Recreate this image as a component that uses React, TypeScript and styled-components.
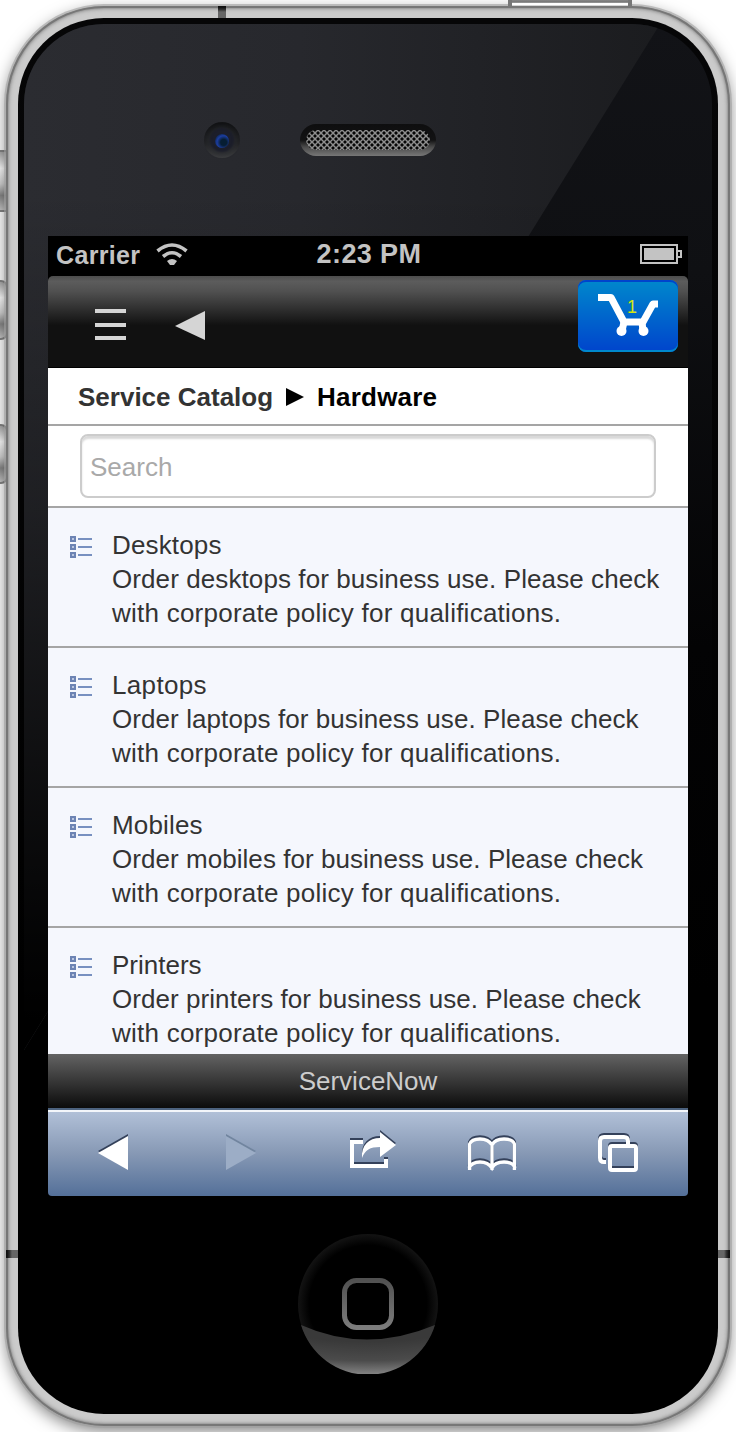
import React from 'react';
import styled, { createGlobalStyle } from 'styled-components';

const GlobalStyle = createGlobalStyle`
  * { box-sizing: border-box; }
  body { margin: 0; background: #fff; font-family: "Liberation Sans", Arial, sans-serif; }
`;

const Page = styled.main`
  position: relative;
  width: 736px;
  height: 1432px;
  padding: 6px;
  overflow: hidden;
  background: #fff;
`;

const Shell = styled.div`
  position: relative;
  width: 724px;
  height: 1420px;
  padding: 12px;
  border-radius: 98px;
  background: #cbcbcb;
  box-shadow:
    inset 0 0 0 2px #777,
    inset 0 0 2px 3px #989898,
    inset 0 0 3px 5px #bdbdbd,
    0 0 0 2px rgba(160, 160, 160, 0.6),
    0 5px 16px rgba(0, 0, 0, 0.5);
`;

const Bezel = styled.div`
  height: 1396px;
  padding: 6px;
  border-radius: 86px;
  background: linear-gradient(#060607, #000 70%);
`;

const Face = styled.div`
  position: relative;
  display: flex;
  flex-direction: column;
  align-items: center;
  height: 1384px;
  border-radius: 80px;
  overflow: hidden;
  background: linear-gradient(180deg, #121317 0%, #0f1013 18%, #030304 45%, #000 70%);
  &::before {
    content: '';
    position: absolute;
    inset: 0;
    clip-path: polygon(0 0, 636px 0, 0 1026px);
    background:
      linear-gradient(180deg, rgba(0, 0, 0, 0) 12%, rgba(0, 0, 0, 0.3) 35%, rgba(0, 0, 0, 0.9) 66%, #000 72%),
      linear-gradient(90deg, #2b2c31 0, #27282d 40%, #1b1c1f 92%);
  }
`;

const Top = styled.div`
  position: relative;
  display: flex;
  align-items: flex-start;
  width: 100%;
  height: 212px;
  padding: 98px 0 0 180px;
  gap: 60px;
`;

const Camera = styled.div`
  display: grid;
  place-items: center;
  width: 36px;
  height: 36px;
  border-radius: 50%;
  background: linear-gradient(#111214, #222326 60%, #3c3d3f);
  &::before {
    content: '';
    width: 14px;
    height: 14px;
    margin-top: 2px;
    border-radius: 50%;
    background: radial-gradient(circle at 62% 60%, #061e33 0 25%, #1c3da0 55%, #0d2348 80%);
    box-shadow: 0 -1px 2px 5px #1c1e2a, 0 0 3px 8px rgba(42, 43, 48, 0.5);
  }
`;

const Speaker = styled.svg`
  display: block;
  margin-top: 2px;
`;

const Screen = styled.div`
  position: relative;
  display: flex;
  flex-direction: column;
  width: 640px;
  height: 960px;
  overflow: hidden;
  background: #000;
  border-radius: 0 0 4px 4px;
`;

const StatusBar = styled.div`
  display: grid;
  grid-template-columns: 1fr auto 1fr;
  align-items: center;
  height: 40px;
  padding: 0 6px 4px 8px;
  color: #c3c3c3;
  font-weight: 700;
  font-size: 27px;
  line-height: 36px;
`;

const CarrierGroup = styled.div`
  display: flex;
  align-items: center;
  gap: 16px;
  font-size: 25px;
  letter-spacing: 0.35px;
  span { position: relative; top: 1px; }
`;

const Clock = styled.span`
  letter-spacing: 0.4px;
`;

const Battery = styled.svg`
  justify-self: end;
`;

const Toolbar = styled.div`
  display: flex;
  height: 92px;
  padding: 4px 10px 0 46px;
  border-bottom: 1px solid #000;
  border-radius: 5px 5px 0 0;
  background: linear-gradient(#4c4c4c 0, #5c5c5c 6%, #505050 17%, #2c2c2c 38%, #111 54%, #111 100%);
`;

const ToolIcon = styled.svg`
  display: block;
  margin: 28px 46px 0 0;
`;

const CartButton = styled.button`
  position: relative;
  width: 100px;
  height: 72px;
  margin-left: auto;
  padding: 0;
  border: 0;
  border-radius: 8px;
  background: linear-gradient(#08c, #04c);
  box-shadow: inset 0 2px #04c, inset 0 -2px #08c;
`;

const CartIcon = styled.svg`
  display: block;
`;

const CartCount = styled.span`
  position: absolute;
  left: 49px;
  top: 17px;
  color: #d4e512;
  font-family: "Liberation Sans", Arial, sans-serif;
  font-size: 18px;
  line-height: 20px;
`;

const Crumbs = styled.nav`
  display: flex;
  align-items: center;
  height: 58px;
  padding: 2px 30px 0;
  border-bottom: 2px solid #a5a5a5;
  background: #fff;
  color: #333;
  font-weight: 700;
  font-size: 26px;
  line-height: 56px;
`;

const CrumbArrow = styled.svg`
  margin: 0 13px 0 13px;
`;

const CurrentCrumb = styled.span`
  color: #000;
  letter-spacing: 0.2px;
`;

const SearchRow = styled.div`
  height: 82px;
  padding: 8px 32px;
  border-bottom: 2px solid #a5a5a5;
  background: #fff;
`;

const SearchInput = styled.input`
  display: block;
  width: 100%;
  height: 64px;
  padding: 2px 8px 0;
  border: 2px solid #ccc;
  border-radius: 8px;
  outline: 0;
  background: #fff;
  box-shadow: inset 0 3px 2px #d9d9d9;
  font-family: inherit;
  font-size: 26px;
  &::placeholder { color: #a9a9a9; opacity: 1; }
`;

const List = styled.ul`
  flex: 1;
  min-height: 0;
  margin: 0;
  padding: 0;
  overflow: hidden;
  background: #f5f7fd;
  list-style: none;
`;

const Item = styled.li`
  display: flex;
  height: 140px;
  padding: 20px 0 0 22px;
  border-bottom: 2px solid #a5a5a5;
  color: #333;
  font-size: 26px;
  line-height: 34px;
`;

const ItemIcon = styled.svg`
  flex: none;
  margin: 8px 20px 0 0;
`;

const Line = styled.div<{ $spacing?: number }>`
  white-space: nowrap;
  letter-spacing: ${({ $spacing = 0 }) => $spacing}px;
`;

const Footer = styled.footer`
  height: 54px;
  background: linear-gradient(#636363, #0b0b0b);
  color: #ccc;
  font-size: 26px;
  line-height: 54px;
  text-align: center;
`;

const BrowserBar = styled.div`
  height: 88px;
  border-top: 2px solid #4c627e;
  box-shadow: inset 0 2px #f3f6fa;
  background: linear-gradient(#b3c2d9, #8799b5 50%, #547099);
`;

const BrowserIcons = styled.svg`
  display: block;
`;

const Home = styled.svg`
  position: relative;
  display: block;
  margin-top: 38px;
`;

const SideButton = styled.div<{ $top: number; $height: number; $round: number }>`
  position: absolute;
  left: -10px;
  top: ${({ $top }) => $top}px;
  width: 18px;
  height: ${({ $height }) => $height}px;
  border: 2px solid #858585;
  border-radius: ${({ $round }) => $round}px;
  background: linear-gradient(#aaa, #fff 28%, #d5d5d5 55%, #888 75%, #c9c9c9);
`;

const PowerButton = styled.div`
  position: absolute;
  left: 508px;
  top: 0;
  width: 124px;
  height: 6px;
  border: solid #777;
  border-width: 0 4px;
  background: linear-gradient(#888 0, #777 2px, #aaa 3px, #fff 3px, #fff 5px, #aaa 6px);
`;

const Seam = styled.div<{ $x: number; $y: number; $w: number; $h: number; $angle: number }>`
  position: absolute;
  left: ${({ $x }) => $x}px;
  top: ${({ $y }) => $y}px;
  width: ${({ $w }) => $w}px;
  height: ${({ $h }) => $h}px;
  background: linear-gradient(${({ $angle }) => $angle}deg, #111 10%, #333 30%, #666 50%);
`;

const items = [
  { name: 'Desktops', noun: 'desktops', nameSpacing: 0.15, spacing: 0.09 },
  { name: 'Laptops', noun: 'laptops', nameSpacing: 0.35, spacing: 0.08 },
  { name: 'Mobiles', noun: 'mobiles', nameSpacing: 0.15, spacing: 0.05 },
  { name: 'Printers', noun: 'printers', nameSpacing: 0, spacing: 0.06 },
];

function BrowserShapes() {
  return (
    <>
      <path d="M50 43 80 26v34z" fill="currentColor" stroke="none" />
      <g fill="none" stroke="currentColor" strokeWidth="4">
        <path d="M315 32h-11v24h34v-7" />
        <path d="M558 52h-2q-4 0-4-4V31q0-4 4-4h20q4 0 4 4v3" />
        <rect x="562" y="36" width="26" height="24" rx="2" />
      </g>
      <path d="M421.600 60V34q2-5 10.400-5t12 6q3-6 12-6t10.400 5v26M444 33v27M421 58q3-6 11-6t12 6q3-6 12-6t11 6" fill="none" stroke="currentColor" strokeWidth="3.300" />
      <path d="M332 22v6c-11 0-19 7-18 20 3-8 8-11 18-11v10l16-12z" fill="currentColor" />
    </>
  );
}

export default function App() {
  return (
    <Page>
      <GlobalStyle />
      <SideButton $top={150} $height={62} $round={1} />
      <SideButton $top={280} $height={60} $round={7} />
      <SideButton $top={424} $height={60} $round={7} />
      <Shell>
        <Bezel>
          <Face>
            <Top>
              <Camera />
              <Speaker width="136" height="32" viewBox="0 0 136 32">
                <defs>
                  <linearGradient id="rim" x2="0" y2="1">
                    <stop stopColor="#0e0e0f" />
                    <stop offset=".5" stopColor="#121213" />
                    <stop offset=".72" stopColor="#4b4b4b" />
                    <stop offset="1" stopColor="#777" />
                  </linearGradient>
                  <pattern id="mesh" width="6" height="6" patternUnits="userSpaceOnUse">
                    <rect width="6" height="6" fill="#060606" />
                    <path d="M-1-1l8 8M7-1l-8 8" stroke="#8e8e8e" strokeWidth="1.5" />
                  </pattern>
                </defs>
                <rect width="136" height="32" rx="16" fill="url(#rim)" />
                <rect x="6" y="6" width="124" height="20" rx="10" fill="url(#mesh)" />
              </Speaker>
            </Top>
            <Screen>
              <StatusBar>
                <CarrierGroup>
                  <span>Carrier</span>
                  <svg width="32" height="24" viewBox="0 0 32 24">
                    <g fill="none" stroke="#c3c3c3" strokeWidth="3.6">
                      <path d="M1.5 9q14.500-12 29 0" />
                      <path d="M7 14.500q9-7.500 18 0" />
                    </g>
                    <path d="M11 19q5-4 10 0l-3 4h-4z" fill="#c3c3c3" />
                  </svg>
                </CarrierGroup>
                <Clock>2:23 PM</Clock>
                <Battery width="42" height="20" viewBox="0 0 42 20">
                  <path d="M1 1h36v18H1zM38 7h3v6h-3" fill="none" stroke="#c3c3c3" strokeWidth="2" />
                  <path d="M4 4h30v12H4z" fill="#c3c3c3" />
                </Battery>
              </StatusBar>
              <Toolbar>
                <ToolIcon width="34" height="34" viewBox="0 0 34 34">
                  <path d="M1 3h31M1 17h31M1 30h31" stroke="#d5d5d5" strokeWidth="4" />
                </ToolIcon>
                <ToolIcon width="34" height="34" viewBox="0 0 34 34">
                  <path d="M1 18 31 3v29z" fill="#d5d5d5" />
                </ToolIcon>
                <CartButton aria-label="Cart">
                  <CartIcon width="100" height="72" viewBox="0 0 100 72">
                    <path d="M20 17.500h13l13 24.500h19l10-18h5" fill="none" stroke="#fff" strokeWidth="7" strokeLinejoin="round" />
                    <path d="M46 42l-2 9M64 42l1 9" stroke="#fff" strokeWidth="7" />
                    <circle cx="43.500" cy="51" r="5" fill="#fff" />
                    <circle cx="65.500" cy="51" r="5" fill="#fff" />
                  </CartIcon>
                  <CartCount>1</CartCount>
                </CartButton>
              </Toolbar>
              <Crumbs>
                <span>Service Catalog</span>
                <CrumbArrow width="18" height="18" viewBox="0 0 18 18">
                  <path d="M0 0 18 9 0 18z" />
                </CrumbArrow>
                <CurrentCrumb>Hardware</CurrentCrumb>
              </Crumbs>
              <SearchRow>
                <SearchInput placeholder="Search" />
              </SearchRow>
              <List>
                {items.map(({ name, noun, nameSpacing, spacing }) => (
                  <Item key={name}>
                    <ItemIcon width="22" height="22" viewBox="0 0 22 22">
                      <path d="M1 1h4v4H1zM1 9h4v4H1zM1 17h4v4H1z" fill="#b9c5df" stroke="#6c83b3" strokeWidth="2" />
                      <path d="M8 3h14M8 11h14M8 19h14" stroke="#7890c0" strokeWidth="2" />
                    </ItemIcon>
                    <div>
                      <Line $spacing={nameSpacing}>{name}</Line>
                      <Line $spacing={spacing}>Order {noun} for business use. Please check</Line>
                      <Line $spacing={0.24}>with corporate policy for qualifications.</Line>
                    </div>
                  </Item>
                ))}
              </List>
              <Footer>ServiceNow</Footer>
              <BrowserBar>
                <BrowserIcons width="640" height="86" viewBox="0 0 640 86">
                  <g color="#34415a" transform="translate(0 -2)"><BrowserShapes /></g>
                  <g color="#fff"><BrowserShapes /></g>
                  <path d="M178 24 208 41 178 58z" fill="#71859f" />
                  <path d="M178 26 208 43 178 60z" fill="#9cadc6" />
                </BrowserIcons>
              </BrowserBar>
            </Screen>
            <Home width="140" height="140" viewBox="0 0 140 140">
              <defs>
                <radialGradient id="button">
                  <stop offset=".84" stopColor="#000" />
                  <stop offset="1" stopColor="#131313" />
                </radialGradient>
                <radialGradient id="shine" cx=".5" cy="-.9" r="1.900">
                  <stop offset=".65" stopColor="#393939" />
                  <stop offset=".85" stopColor="#4b4b4b" />
                  <stop offset="1" stopColor="#858585" />
                </radialGradient>
                <linearGradient id="glyph" x2="0" y2="1">
                  <stop stopColor="#515151" />
                  <stop offset="1" stopColor="#7c7c7c" />
                </linearGradient>
              </defs>
              <circle cx="70" cy="70" r="70" fill="url(#button)" />
              <path d="M3 91Q68 120 137 91A70 70 0 0 1 3 91z" fill="url(#shine)" />
              <rect x="46.500" y="46.500" width="47" height="47" rx="12" fill="#000" stroke="url(#glyph)" strokeWidth="5" />
            </Home>
          </Face>
        </Bezel>
      </Shell>
      <PowerButton />
      <Seam $x={218} $y={6} $w={8} $h={12} $angle={180} />
      <Seam $x={6} $y={1250} $w={12} $h={8} $angle={90} />
      <Seam $x={718} $y={1250} $w={12} $h={8} $angle={270} />
    </Page>
  );
}
